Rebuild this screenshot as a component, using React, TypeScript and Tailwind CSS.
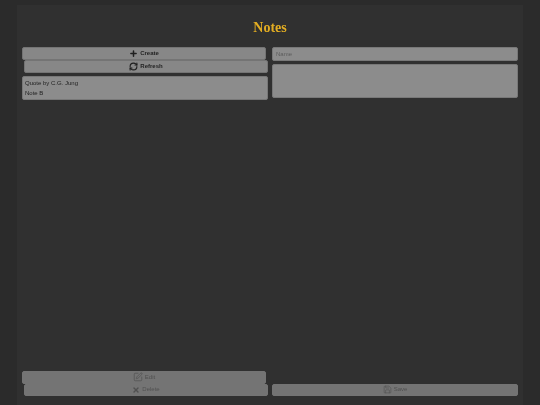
import { Plus, RefreshCw, Save, SquarePen, X } from "lucide-react";
import type { ComponentType, ReactNode } from "react";

const NOTES = ["Quote by C.G. Jung", "Note B"];

function ActionButton({
  icon: Icon,
  children,
  disabled,
  iconSize = 9,
  iconStroke = 2.5,
  className,
}: {
  icon: ComponentType<{ size?: number; strokeWidth?: number }>;
  children: ReactNode;
  disabled?: boolean;
  iconSize?: number;
  iconStroke?: number;
  className?: string;
}) {
  return (
    <button
      type="button"
      className={`flex items-center justify-center gap-[2px] rounded-[2px] border border-[#747474] text-[6px] ${
        disabled ? "h-[12.5px] bg-[#747474] text-[#505050]" : "h-[13px] bg-[#878787] font-bold text-[#1f1f1f]"
      } ${className ?? ""}`}
    >
      <Icon size={iconSize} strokeWidth={iconStroke} />
      {children}
    </button>
  );
}

export default function App() {
  return (
    <div className="flex h-[405px] w-[540px] overflow-hidden bg-[#2b2b2b] px-[17px] pt-[5px] font-['Liberation_Sans',sans-serif] blur-[0.3px]">
      <div className="flex min-w-0 flex-1 flex-col bg-[#303030] px-[5px] pb-[9px]">
        <h1 className="mt-[15px] mb-[12px] text-center font-['Liberation_Serif',serif] text-[14px] leading-[15px] font-bold text-[#e3ad22]">
          Notes
        </h1>
        <div className="grid flex-1 grid-cols-[246px_246px] gap-x-[4px]">
          <div className="flex flex-col">
            <ActionButton icon={Plus} iconStroke={4} className="mr-[2px]">
              Create
            </ActionButton>
            <ActionButton icon={RefreshCw} iconStroke={3} className="ml-[2px]">
              Refresh
            </ActionButton>
            <ul className="mt-[3px] rounded-[2px] border border-[#787878] bg-[#8c8c8c] px-[2px] py-[1px] text-[6px] text-[#222]">
              {NOTES.map((note) => (
                <li key={note} className="py-[1px] leading-[8px]">
                  {note}
                </li>
              ))}
            </ul>
            <ActionButton icon={SquarePen} iconSize={10} iconStroke={1.6} disabled className="mt-auto mr-[2px]">
              Edit
            </ActionButton>
            <ActionButton icon={X} iconSize={8} iconStroke={4} disabled className="ml-[2px]">
              Delete
            </ActionButton>
          </div>
          <div className="flex flex-col">
            <input
              placeholder="Name"
              className="h-[14px] rounded-[2px] border border-[#787878] bg-[#8c8c8c] px-[3px] pb-[1px] text-[6px] outline-none placeholder:text-[#5c5c5c]"
            />
            <textarea className="mt-[3px] h-[34px] resize-none rounded-[2px] border border-[#787878] bg-[#8c8c8c] outline-none" />
            <ActionButton icon={Save} iconSize={9} iconStroke={1.6} disabled className="mt-auto">
              Save
            </ActionButton>
          </div>
        </div>
      </div>
    </div>
  );
}
